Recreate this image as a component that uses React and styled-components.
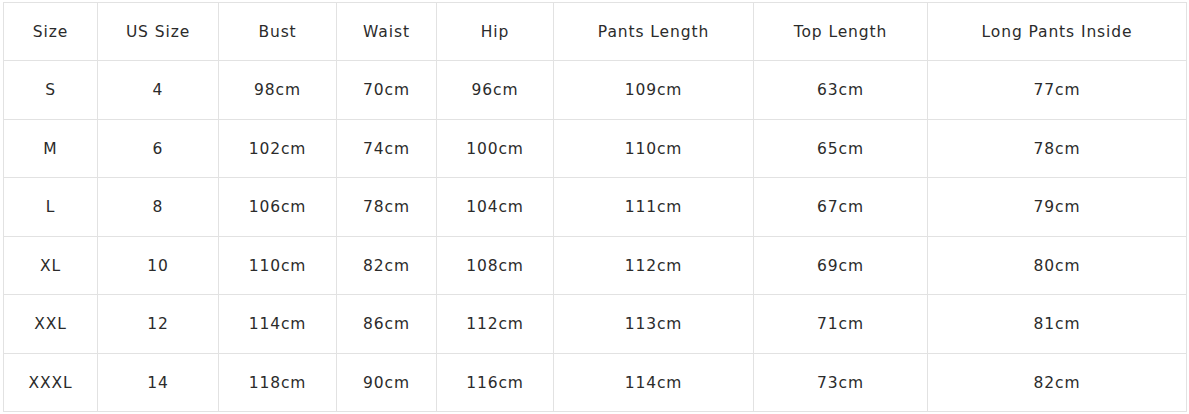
import React from "react";
import styled, { createGlobalStyle } from "styled-components";

const GlobalStyle = createGlobalStyle`
  html, body {
    margin: 0;
    padding: 0;
    background: #ffffff;
  }
  body {
    padding: 2px 3px;
    font-family: "DejaVu Sans", "Open Sans", sans-serif;
  }
`;

const SizeTable = styled.table`
  border-collapse: collapse;
  table-layout: fixed;
  width: 1183px;
  color: #2b2b2b;
  font-size: 15.5px;
  letter-spacing: 0.9px;
`;

const Cell = styled.td`
  border: 1px solid #e2e2e2;
  text-align: center;
  vertical-align: middle;
  height: ${(p) => p.$h}px;
  padding: 0;
  font-weight: 400;
  white-space: nowrap;
`;

const HeadCell = styled(Cell).attrs({ as: "th" })`
  font-weight: 400;
`;

const columns = [
  { label: "Size", width: 94 },
  { label: "US Size", width: 121 },
  { label: "Bust", width: 118 },
  { label: "Waist", width: 100 },
  { label: "Hip", width: 117 },
  { label: "Pants Length", width: 200 },
  { label: "Top Length", width: 174 },
  { label: "Long Pants Inside", width: 259 },
];

const rows = [
  ["S", "4", "98cm", "70cm", "96cm", "109cm", "63cm", "77cm"],
  ["M", "6", "102cm", "74cm", "100cm", "110cm", "65cm", "78cm"],
  ["L", "8", "106cm", "78cm", "104cm", "111cm", "67cm", "79cm"],
  ["XL", "10", "110cm", "82cm", "108cm", "112cm", "69cm", "80cm"],
  ["XXL", "12", "114cm", "86cm", "112cm", "113cm", "71cm", "81cm"],
  ["XXXL", "14", "118cm", "90cm", "116cm", "114cm", "73cm", "82cm"],
];

export default function App() {
  return (
    <>
      <GlobalStyle />
      <SizeTable>
        <colgroup>
          {columns.map((c) => (
            <col key={c.label} style={{ width: c.width }} />
          ))}
        </colgroup>
        <thead>
          <tr>
            {columns.map((c) => (
              <HeadCell key={c.label} $h={57}>
                {c.label}
              </HeadCell>
            ))}
          </tr>
        </thead>
        <tbody>
          {rows.map((r, i) => (
            <tr key={r[0]}>
              {r.map((v, j) => (
                <Cell key={j} $h={i % 2 === 0 ? 58 : 57}>
                  {v}
                </Cell>
              ))}
            </tr>
          ))}
        </tbody>
      </SizeTable>
    </>
  );
}
